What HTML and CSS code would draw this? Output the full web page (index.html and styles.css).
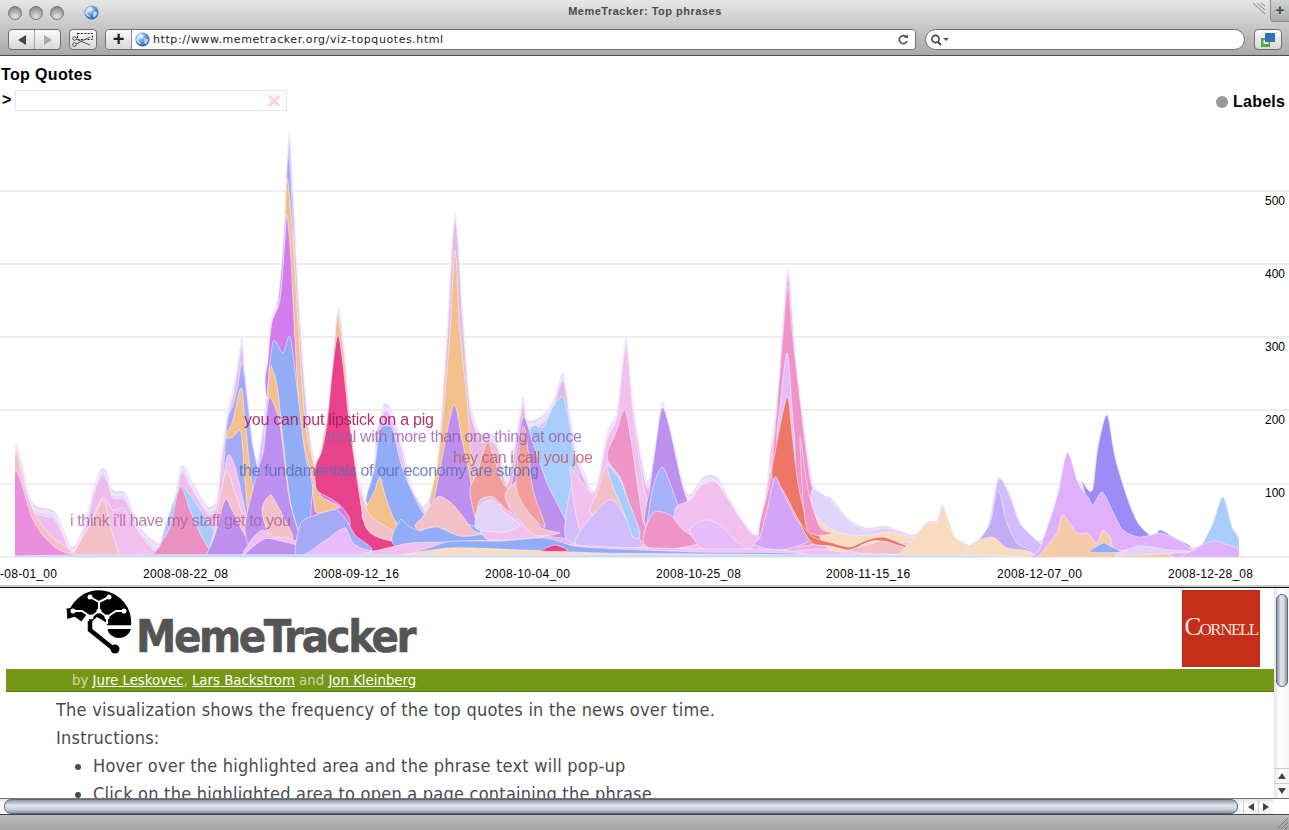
FILE: index.html
```html
<!DOCTYPE html>
<html lang="en">
<head>
    <meta charset="UTF-8">
    <meta name="viewport" content="width=device-width, initial-scale=1.0">
    <title>MemeTracker: Top phrases</title>
    <link rel="stylesheet" href="styles.css">
</head>
<body>
    <!-- Browser window top -->
    <div class="chrome">
        <div class="titlebar">
            <div class="lights">
                <span class="light"></span>
                <span class="light"></span>
                <span class="light"></span>
            </div>
            <svg class="globe globeTitle" viewBox="0 0 16 16"><use href="#globeIcon"/></svg>
            <div class="windowTitle">MemeTracker: Top phrases</div>
            <svg class="grip" viewBox="0 0 16 14"><path d="M2 1l12 11M6 1l8 7M10 1l4 3" stroke="#8b8b8b" stroke-width="1" fill="none"/></svg>
            <div class="newTab">+</div>
        </div>
        <div class="toolbar">
            <div class="btnGroup navGroup">
                <div class="toolBtn"><span class="arrowLeft"></span></div>
                <div class="toolBtn"><span class="arrowRight"></span></div>
            </div>
            <div class="btnGroup snipBtn">
                <svg viewBox="0 0 26 18" width="26" height="18">
                    <rect x="7.500" y="2.500" width="15" height="6" fill="none" stroke="#222" stroke-dasharray="2 1.400"/>
                    <path d="M6 8l14 6M6 13l14-7" stroke="#555" fill="none"/>
                    <circle cx="4.500" cy="7.500" r="1.800" fill="none" stroke="#555"/>
                    <circle cx="4.500" cy="13.500" r="1.800" fill="none" stroke="#555"/>
                </svg>
            </div>
            <div class="urlGroup">
                <div class="plusBtn">+</div>
                <div class="urlField">
                    <svg class="globe" viewBox="0 0 16 16"><use href="#globeIcon"/></svg>
                    <span class="urlText">http://www.memetracker.org/viz-topquotes.html</span>
                    <svg class="reload" viewBox="0 0 12 12"><path d="M9.500 3.400A4 4 0 1 0 10 7" fill="none" stroke="#555" stroke-width="1.700"/><path d="M7 3.600l4 .6V.4z" fill="#555"/></svg>
                </div>
            </div>
            <div class="searchField">
                <svg viewBox="0 0 20 12" width="20" height="12"><circle cx="5.500" cy="5" r="3.600" fill="none" stroke="#444" stroke-width="1.600"/><path d="M8 8l3 3" stroke="#444" stroke-width="2"/><path d="M13 4h6l-3 3z" fill="#555"/></svg>
            </div>
            <div class="btnGroup bookmarkBtn">
                <svg viewBox="0 0 16 16" width="16" height="16"><rect x="1" y="6" width="9" height="9" fill="#58a83a"/><rect x="3.500" y="8" width="5" height="4" fill="#e8f2e0"/><rect x="5" y="1" width="10" height="9" fill="#2f72b8"/></svg>
            </div>
        </div>
    </div>

    <!-- Chart frame -->
    <div class="viz">
        <div class="vizHead">
            <h1 class="vizTitle">Top Quotes</h1>
            <div class="vizControls">
                <b class="prompt">&gt;</b>
                <div class="searchBox">
                    <svg viewBox="0 0 14 14" width="14" height="14"><path d="M2 2l10 10M12 2L2 12" stroke="#f8d6d6" stroke-width="3.200" fill="none"/></svg>
                </div>
                <div class="labelsToggle"><span class="dot"></span><b>Labels</b></div>
            </div>
        </div>
        <svg class="chart" viewBox="0 112 1289 473" width="1289" height="473">
            <defs>
                <clipPath id="plotClip"><rect x="15" y="112" width="1224" height="445"/></clipPath>
                <linearGradient id="bandFill" gradientUnits="userSpaceOnUse" x1="15" x2="1239" y1="0" y2="0">
                    <stop offset="0" stop-color="#f0bcee"/>
                    <stop offset="0.17" stop-color="#eebcf0"/>
                    <stop offset="0.23" stop-color="#d0bcf8"/>
                    <stop offset="0.33" stop-color="#d8bcf8"/>
                    <stop offset="0.4" stop-color="#eebcd8"/>
                    <stop offset="0.48" stop-color="#dcb8f8"/>
                    <stop offset="0.55" stop-color="#eeb2e6"/>
                    <stop offset="0.65" stop-color="#e6b2ee"/>
                    <stop offset="0.7" stop-color="#ddbdf6"/>
                    <stop offset="0.78" stop-color="#f6d8c4"/>
                    <stop offset="1" stop-color="#dcc0fa"/>
                </linearGradient>
                <polygon id="outline" points="15,600 15,470 16,443 22,462 33,503 53,510 62,525 72,547 80,535 87,513 95,482 102,468 108,475 113,490 125,492 133,510 140,527 157,543 165,537 170,527 176,490 182,465 193,483 203,500 210,507 217,497 222,450 227,413 233,387 238,360 242,337 245,370 248,403 252,440 257,460 262,430 267,387 270,327 277,300 280,280 285,220 289,132 293,187 298,287 305,387 311,440 317,467 323,452 328,437 335,337 339,307 345,353 349,400 353,437 360,480 367,500 373,470 377,437 383,405 390,407 397,425 403,447 410,480 420,505 428,500 437,467 447,333 455,212 463,317 470,400 480,433 487,432 497,440 507,477 515,440 523,397 528,420 543,415 553,400 563,373 570,413 577,453 586,475 595,490 607,433 617,410 626,337 633,400 647,480 657,440 662,402 670,427 687,493 703,477 717,477 730,500 750,530 760,527 773,433 780,367 788,268 797,367 813,483 830,497 837,505 850,520 867,528 887,526 913,535 927,522 937,520 943,505 955,537 970,546 987,530 998,479 1010,493 1020,523 1033,537 1043,538 1057,497 1067,453 1077,480 1083,482 1092,490 1098,447 1107,415 1115,457 1127,497 1138,523 1153,537 1160,530 1173,537 1190,547 1203,543 1213,523 1223,497 1232,527 1239,540 1239,600"/>
            </defs>

            <g class="grid">
                <line x1="0" x2="1289" y1="191" y2="191"/>
                <line x1="0" x2="1289" y1="264" y2="264"/>
                <line x1="0" x2="1289" y1="337" y2="337"/>
                <line x1="0" x2="1289" y1="410" y2="410"/>
                <line x1="0" x2="1289" y1="484" y2="484"/>
                <line x1="0" x2="1289" y1="557" y2="557"/>
            </g>

            <g class="plot" clip-path="url(#plotClip)">
                <!-- silhouette and the pale bands just under it -->
                <use class="lav" href="#outline"/>
                <use class="paleBand" href="#outline" transform="translate(0,3)"/>
                <use class="lav" href="#outline" transform="translate(0,5)"/>
                <use href="#outline" transform="translate(0,8)" fill="url(#bandFill)"/>

                <!-- far left humps -->
                <polygon class="paleSalmon" points="15,600 15,455 22,478 33,510 50,535 70,550 90,570"/>
                <polygon class="softPink" points="60,570 77,547 93,517 103,497 113,510 123,508 133,523 147,543 157,553 170,570"/>
                <polygon class="paleSalmon" points="68,570 77,547 93,520 103,500 110,525 118,570"/>
                <polygon class="pinkBright" points="15,600 15,473 33,520 50,543 67,553 100,556 200,556 200,600"/>
                <polygon class="skyBlue" points="160,570 178,490 190,495 202,512 212,528 222,546 240,570"/>
                <polygon class="rose" points="150,570 160,545 170,527 180,487 190,510 200,533 212,553 230,570"/>

                <!-- hump at 242 -->
                <polygon class="peri" points="210,570 218,520 222,490 227,423 233,405 238,385 242,362 247,395 252,440 258,470 268,520 285,570"/>
                <polygon class="tan" points="226,437 233,420 241,388 245,420 250,470 258,510 272,540 252,540 245,480 241,432 233,437"/>
                <polygon class="softPink" points="210,570 218,520 222,490 228,455 236,470 244,505 252,535 270,570"/>
                <polygon class="paleSalmon" points="216,530 226,472 234,490 240,507 247,540 235,560"/>
                <polygon class="purple" points="200,570 207,553 215,535 225,500 233,512 245,535 262,552 280,570"/>

                <!-- main peak at 289 -->
                <polygon class="peri" points="262,570 262,470 268,400 275,330 283,250 288,155 292,200 296,300 302,400 310,470 325,510 345,570"/>
                <polygon class="tan" points="278,350 284,260 287,178 293,240 298,320 305,420 315,470 325,510 300,510"/>
                <polygon class="magenta" points="267,400 268,360 272,322 280,300 285,240 287,215 291,260 295,340 300,420 310,470 320,500 345,510 350,550 300,550"/>
                <polygon class="blue" points="266,470 267,400 273,342 283,353 290,337 297,387 305,453 313,487 317,510 343,510 360,540 375,560 280,560"/>
                <polygon class="tan" points="268,402 270,366 277,385 282,430 290,500 300,538 292,540 280,490 272,430"/>
                <polygon class="purple" points="245,530 258,470 264,448 268,403 272,400 280,425 288,490 292,510 300,535 315,560 262,560"/>
                <polygon class="paleSalmon" points="262,510 270,495 276,503 285,520 293,537 285,540 270,537"/>
                <polygon class="softPink" points="248,545 262,530 275,537 290,538 310,548 330,548 350,553 250,560"/>
                <polygon class="purple" points="240,570 262,540 285,542 320,552 345,570"/>

                <!-- red peak -->
                <polygon class="tan" points="320,480 330,400 336,325 339,320 345,365 350,420 358,480 365,515"/>
                <polygon class="red" points="315,480 322,450 327,423 333,365 338,335 343,365 349,420 355,465 362,510 368,530 385,537 420,548 470,553 470,570 340,570"/>
                <polygon class="magenta" points="313,490 320,493 340,505 350,520 345,530 313,530"/>
                <polygon class="tan" points="313,485 322,497 340,507 330,510 316,512"/>
                <polygon class="peri" points="300,525 316,515 335,510 345,518 355,535 370,552 300,565"/>
                <polygon class="lilac" points="290,570 315,548 330,537 345,528 353,543 367,550 400,555 420,570"/>

                <!-- hump at 383 -->
                <polygon class="lilac" points="376,450 383,415 390,415 400,450 410,485 430,525 405,535"/>
                <polygon class="blue" points="366,500 374,470 380,430 388,426 393,430 400,460 407,480 420,508 435,530 420,537 395,530 375,510"/>
                <polygon class="tan" points="362,515 370,500 375,490 380,477 385,495 393,517 403,533 395,540 368,525"/>
                <polygon class="paleSalmon" points="360,488 367,510 375,520 392,530 405,540 420,546 380,538 365,525"/>

                <!-- peak at 455 -->
                <polygon class="tan" points="430,510 437,467 443,417 450,333 455,250 460,333 467,400 472,467 480,527 460,530"/>
                <polygon class="purple" points="430,505 435,495 443,453 454,405 462,440 470,477 475,517 485,535 440,530"/>
                <polygon class="blue" points="400,520 410,527 423,530 430,510 437,503 450,520 470,525 490,530 515,530 525,548 400,548"/>
                <polygon class="paleSalmon" points="415,525 422,518 437,497 450,502 460,513 473,530 483,534 460,536 437,527 420,530"/>

                <!-- humps at 487 and 523 -->
                <polygon class="softPink" points="478,520 490,505 505,505 520,505 535,525 550,535 490,540"/>
                <polygon class="salmon" points="470,490 477,473 487,442 493,455 503,483 517,500 520,515 507,510 493,497 480,500 475,515"/>
                <polygon class="paleLav" points="475,525 480,505 493,500 505,513 520,525 505,532 480,530"/>
                <polygon class="skyBlue" points="520,500 530,430 543,427 553,407 563,397 570,427 575,467 582,517 590,535 565,535"/>
                <polygon class="purple" points="510,510 515,467 523,417 533,443 547,483 557,503 567,523 577,537 545,535"/>
                <polygon class="paleSalmon" points="505,495 520,480 528,500 540,527 560,533 535,535 515,515"/>
                <polygon class="salmon" points="516,485 523,427 528,450 533,490 545,527 527,510"/>
                <polygon class="lilacCool" points="565,535 575,470 582,490 590,510 605,530 625,545 590,545"/>

                <!-- peak at 626 -->
                <polygon class="softPink" points="570,470 580,480 595,492 607,440 617,416 626,347 633,413 643,483 653,520 675,550 590,550"/>
                <polygon class="paleSalmon" points="590,510 597,493 607,465 617,490 630,530 600,522"/>
                <polygon class="lilacCool" points="575,540 600,507 613,500 627,520 645,545 590,550"/>
                <polygon class="pinkHot" points="607,457 617,430 625,410 633,453 643,520 653,537 640,540 627,497 620,477"/>
                <polygon class="skyBlue" points="607,465 620,480 627,497 640,533 633,537 623,510 613,487"/>

                <!-- peak at 662 -->
                <polygon class="purple" points="645,525 650,487 655,450 662,408 670,430 683,487 697,523 713,540 670,545"/>
                <polygon class="periLight" points="645,535 647,523 653,487 662,467 670,483 680,510 693,533 670,540"/>
                <polygon class="softPink" points="675,510 690,500 703,484 717,483 730,503 750,532 760,536 745,550 680,550"/>
                <polygon class="pinkHot" points="643,542 653,513 670,515 683,530 700,543 660,550"/>
                <polygon class="lilac" points="690,530 705,520 720,525 735,540 745,550 705,550"/>

                <!-- peak at 788 -->
                <polygon class="softPink" points="770,470 783,400 793,370 800,400 813,487 828,500 845,530 805,530"/>
                <polygon class="pinkHot" points="760,540 770,480 777,407 783,333 788,287 793,340 800,400 806,450 813,490 830,525 810,545"/>
                <polygon class="lilac" points="777,440 780,407 787,353 792,407 795,460 785,480"/>
                <polygon class="coral" points="772,477 775,453 787,397 792,433 798,483 807,517 830,543 813,542 797,517 783,490"/>
                <polygon class="purpleSoft" points="755,545 760,537 767,510 775,477 783,493 797,520 810,540 780,550"/>

                <!-- after 800 -->
                <polygon class="paleLav" points="812,490 830,500 850,522 867,530 887,528 913,537 880,542 840,540 815,525"/>
                <polygon class="paleTan" points="806,505 820,520 833,530 850,535 870,535 890,532 916,540 880,545 830,550"/>
                <polygon class="pinkHot" points="800,437 808,490 820,527 833,533 815,535 805,520"/>
                <polygon class="coral" points="800,523 813,537 833,543 850,547 867,540 883,537 900,543 917,552 880,541 866,543 850,550 830,546 812,543"/>
                <polygon class="paleSalmon" points="850,551 867,545 883,541 900,546 920,553 880,555"/>
                <polygon class="softPink" points="790,552 820,549 850,553 900,555 790,556"/>

                <!-- peak at 943 -->
                <polygon class="paleTan" points="895,570 917,535 927,523 937,522 943,507 955,537 970,546 995,570"/>

                <!-- peak at 998 -->
                <polygon class="lilacCool" points="960,570 968,548 987,530 998,480 1008,492 1020,523 1033,537 1043,547 1055,570"/>
                <polygon class="lilacDeep" points="976,545 990,523 998,490 1007,523 1017,543 1030,552 976,552"/>
                <polygon class="paleTan" points="955,570 973,545 992,537 1007,548 1030,552 1050,570"/>

                <!-- peaks at 1067 and 1107 -->
                <polygon class="violet" points="1082,482 1088,490 1093,488 1098,447 1107,415 1115,457 1127,497 1138,523 1153,537 1160,530 1173,537 1190,547 1150,548 1100,530"/>
                <polygon class="lilacWarm" points="1030,570 1040,548 1057,497 1067,453 1077,480 1082,490 1088,497 1093,505 1102,492 1112,510 1123,530 1140,537 1160,533 1173,538 1190,548 1200,570"/>
                <polygon class="tanSoft" points="1035,570 1043,552 1057,533 1063,515 1077,533 1087,533 1097,543 1103,530 1110,537 1117,550 1160,550 1175,570"/>
                <polygon class="blue" points="1090,552 1103,543 1108,545 1120,552"/>
                <polygon class="paleLav" points="1120,553 1140,546 1170,550 1190,552 1120,556"/>

                <!-- last peak -->
                <polygon class="skyBlue" points="1190,570 1203,543 1213,523 1223,497 1232,527 1239,540 1245,570"/>
                <polygon class="lilacWarm" points="1165,570 1195,549 1213,541 1225,544 1245,552 1245,570"/>

                <!-- bottom stripes -->
                <polygon class="softPink" points="350,570 400,545 450,542 500,540 560,544 610,547 700,549 790,551 800,570"/>
                <polygon class="blue" points="410,570 440,544 470,541 500,541 545,538 575,546 620,549 700,552 800,554 820,570"/>
                <polygon class="paleTan" points="370,570 440,549 520,550 600,553 700,554 800,556 830,570"/>
                <polygon class="red" points="542,551 555,545 568,551"/>
                <polygon class="paleSky" points="15,570 15,556 500,555 1000,556 1000,570"/>
            </g>

            <g class="axisY">
                <text x="1265" y="205">500</text>
                <text x="1265" y="278">400</text>
                <text x="1265" y="351">300</text>
                <text x="1265" y="424">200</text>
                <text x="1265" y="497">100</text>
            </g>
            <g class="axisX">
                <text x="-28" y="578">2008-08-01_00</text>
                <text x="143" y="578">2008-08-22_08</text>
                <text x="314" y="578">2008-09-12_16</text>
                <text x="485" y="578">2008-10-04_00</text>
                <text x="656" y="578">2008-10-25_08</text>
                <text x="826" y="578">2008-11-15_16</text>
                <text x="997" y="578">2008-12-07_00</text>
                <text x="1168" y="578">2008-12-28_08</text>
            </g>
            <g class="quotes">
                <text class="q1" x="244" y="425" textLength="190">you can put lipstick on a pig</text>
                <text class="q2" x="327" y="442" textLength="255">deal with more than one thing at once</text>
                <text class="q3" x="453" y="463" textLength="140">hey can i call you joe</text>
                <text class="q4" x="239" y="476" textLength="300">the fundamentals of our economy are strong</text>
                <text class="q5" x="70" y="526" textLength="221">i think i'll have my staff get to you</text>
            </g>
        </svg>
    </div>
    <div class="frameLine"></div>

    <!-- Lower frame -->
    <div class="lowerFrame">
        <div class="pageContent">
            <div class="logoRow">
                <svg class="logoMark" viewBox="0 0 80 70" width="80" height="70">
                    <path d="M7 29A32 32 0 0 1 71 36L47 36L47 33L37 27L29 34L29 25L20 25Z" fill="#000"/>
                    <path d="M7 23L16 22L24 28" stroke="#000" stroke-width="9" fill="none"/>
                    <path d="M47 39H71A12.500 12.500 0 0 1 47 39Z" fill="#000"/>
                    <path d="M30 31V40L55 60" stroke="#000" stroke-width="4.500" fill="none"/>
                    <path d="M31 27L39 21L47 27V34M39 21V12L30 7M39 12L49 7M47 27L56 21L64 21M31 27L22 21L15 21" stroke="#fff" stroke-width="2" fill="none"/>
                    <path d="M37 30V40L47 45V36H72" stroke="#fff" stroke-width="1.600" fill="none"/>
                    <circle cx="31" cy="27" r="2.500" fill="#fff"/><circle cx="47" cy="27" r="2.500" fill="#fff"/><circle cx="39" cy="21" r="2.500" fill="#fff"/>
                    <circle cx="30" cy="7" r="2.500" fill="#fff"/><circle cx="49" cy="7" r="2.500" fill="#fff"/><circle cx="64" cy="21" r="2.500" fill="#fff"/><circle cx="13" cy="21" r="2.500" fill="#fff"/>
                    <circle cx="55" cy="59" r="4.500" fill="#000"/>
                </svg>
                <div class="wordmark">MemeTracker</div>
                <div class="cornell"><span class="cornellBig">C</span>ORNELL</div>
            </div>
            <div class="authorBar">by <a href="#">Jure Leskovec</a>, <a href="#">Lars Backstrom</a> and <a href="#">Jon Kleinberg</a></div>
            <div class="intro">
                <p>The visualization shows the frequency of the top quotes in the news over time.</p>
                <p>Instructions:</p>
                <ul>
                    <li>Hover over the highlighted area and the phrase text will pop-up</li>
                    <li>Click on the highlighted area to open a page containing the phrase.</li>
                </ul>
            </div>
        </div>
        <div class="vScroll">
            <div class="vThumb"></div>
            <div class="vTrack"></div>
            <div class="scrollBtn"><span class="tinyUp"></span></div>
            <div class="scrollBtn"><span class="tinyDown"></span></div>
        </div>
    </div>
    <div class="hScroll">
        <div class="hThumb"></div>
        <div class="scrollBtnH"><span class="tinyLeft"></span></div>
        <div class="scrollBtnH"><span class="tinyRight"></span></div>
        <div class="scrollCorner"></div>
    </div>
    <div class="statusBar">
        <svg viewBox="0 0 14 14" width="14" height="14"><path d="M13 2L2 13M13 6L6 13M13 10L10 13" stroke="#777" fill="none"/></svg>
    </div>

    <svg class="iconDefs" width="0" height="0">
        <defs>
            <radialGradient id="globeFill" cx="40%" cy="30%" r="75%">
                <stop offset="0" stop-color="#cfe6fb"/>
                <stop offset="0.5" stop-color="#5a9be0"/>
                <stop offset="1" stop-color="#1f5cae"/>
            </radialGradient>
            <symbol id="globeIcon" viewBox="0 0 16 16">
                <circle cx="8" cy="8" r="7.500" fill="url(#globeFill)"/>
                <path d="M5 2c3 0 5 1 4 3S5 6 4 8s2 3 3 5c-3 0-5-2-6-5 1-3 2-5 4-6zM11 7c2 0 3 1 3 2s-2 4-3 4-1-2-1-3 0-3 1-3z" fill="#e8f1fb" opacity=".75"/>
            </symbol>
        </defs>
    </svg>

    <script src="chart.js"></script>
</body>
</html>
```

FILE: styles.css
```css
/* page */
html, body {
    margin: 0;
    padding: 0;
}

body {
    width: 1289px;
    height: 830px;
    overflow: hidden;
    display: flex;
    flex-direction: column;
    background-color: #fff;
    font-family: "Liberation Sans", Arial, sans-serif;
    color: #000;
}

/* window chrome */
.chrome {
    height: 55px;
    flex: none;
    background: linear-gradient(#e6e6e6, #c6c6c6 50%, #a9a9a9);
    border-bottom: 1px solid #4a4a4a;
}

.titlebar {
    height: 24px;
    display: flex;
    align-items: center;
    position: relative;
}

.lights {
    display: flex;
    gap: 7px;
    margin-left: 8px;
    margin-top: 1px;
}

.light {
    width: 14px;
    height: 14px;
    border-radius: 50%;
    border: 1px solid #777;
    box-sizing: border-box;
    background: radial-gradient(circle at 50% 85%, #e8e8e8, #a9a9a9 55%, #777);
}

.globe {
    width: 15px;
    height: 15px;
    flex: none;
}

.globeTitle {
    margin-left: 20px;
}

.windowTitle {
    flex: 1;
    text-align: center;
    font-size: 11px;
    font-weight: bold;
    letter-spacing: 0.5px;
    color: #4c4c4c;
    padding-right: 60px;
    margin-top: -2px;
}

.grip {
    width: 16px;
    height: 14px;
    margin-right: 3px;
    margin-top: -6px;
}

.newTab {
    width: 18px;
    height: 21px;
    margin-top: -3px;
    border-left: 1px solid #8a8a8a;
    border-bottom: 1px solid #8a8a8a;
    border-bottom-left-radius: 4px;
    background: linear-gradient(#d2d2d2, #ababab);
    text-align: center;
    font-size: 15px;
    font-weight: bold;
    line-height: 20px;
    color: #444;
}

.toolbar {
    height: 21px;
    margin-top: 5px;
    padding-left: 8px;
    display: flex;
    align-items: stretch;
}

.btnGroup {
    display: flex;
    border: 1px solid #6f6f6f;
    border-radius: 4px;
    box-sizing: border-box;
    background: linear-gradient(#fafafa, #d8d8d8);
    align-items: center;
    justify-content: center;
}

.navGroup {
    width: 53px;
}

.toolBtn {
    flex: 1;
    height: 100%;
    display: flex;
    align-items: center;
    justify-content: center;
}

.toolBtn + .toolBtn {
    border-left: 1px solid #a8a8a8;
}

.arrowLeft {
    border-top: 5px solid transparent;
    border-bottom: 5px solid transparent;
    border-right: 8px solid #444;
}

.arrowRight {
    border-top: 5px solid transparent;
    border-bottom: 5px solid transparent;
    border-left: 8px solid #a8a8a8;
}

.snipBtn {
    width: 28px;
    margin-left: 8px;
}

.urlGroup {
    width: 811px;
    margin-left: 8px;
    display: flex;
    border: 1px solid #6f6f6f;
    border-radius: 4px;
    box-sizing: border-box;
    overflow: hidden;
}

.plusBtn {
    width: 26px;
    flex: none;
    box-sizing: border-box;
    border-right: 1px solid #8a8a8a;
    background: linear-gradient(#fafafa, #d8d8d8);
    text-align: center;
    font-size: 20px;
    font-weight: bold;
    line-height: 18px;
    color: #222;
}

.urlField {
    flex: 1;
    display: flex;
    align-items: center;
    background-color: #fff;
    padding-left: 3px;
}

.urlText {
    flex: 1;
    margin-left: 3px;
    font-family: "DejaVu Sans", sans-serif;
    font-size: 11px;
    letter-spacing: 0.58px;
    color: #1a1a1a;
    white-space: nowrap;
}

.reload {
    width: 12px;
    height: 12px;
    margin-right: 6px;
}

.searchField {
    width: 320px;
    margin-left: 9px;
    box-sizing: border-box;
    border: 1px solid #6f6f6f;
    border-radius: 11px;
    background-color: #fff;
    display: flex;
    align-items: center;
    padding-left: 4px;
}

.bookmarkBtn {
    width: 28px;
    margin-left: 9px;
}

/* chart frame */
.viz {
    height: 529px;
    flex: none;
    overflow: hidden;
}

.vizHead {
    height: 56px;
    box-sizing: border-box;
    padding-top: 10px;
}

.vizTitle {
    margin: 0 0 0 1px;
    font-size: 16px;
    line-height: 18px;
    letter-spacing: 0.35px;
    font-weight: bold;
}

.vizControls {
    display: flex;
    align-items: center;
    margin-top: 6px;
    height: 21px;
    padding-left: 2px;
}

.prompt {
    font-size: 16px;
    width: 13px;
    margin-top: -1px;
}

.searchBox {
    width: 272px;
    height: 21px;
    box-sizing: border-box;
    border: 1px solid #e6e6e6;
    display: flex;
    align-items: center;
    justify-content: flex-end;
    padding-right: 5px;
}

.labelsToggle {
    margin-left: auto;
    display: flex;
    align-items: center;
    font-size: 16px;
    letter-spacing: 0.2px;
    margin-right: 4px;
    margin-top: 2px;
}

.dot {
    width: 12px;
    height: 12px;
    border-radius: 50%;
    background-color: #999;
    margin-right: 5px;
}

.chart {
    display: block;
}

.grid line {
    stroke: #dddddd;
    stroke-width: 1;
}

.plot {
    filter: blur(0.35px);
}

.plot path,
.plot use {
    stroke: #f8f0fc;
    stroke-width: 0.6;
    stroke-linejoin: round;
}

.axisY text {
    font-size: 12px;
    fill: #000;
}

.axisX text {
    font-size: 12px;
    letter-spacing: 0.3px;
    fill: #000;
}

.quotes text {
    font-size: 16px;
}

.q1 { fill: #a81e5c; opacity: 0.9; }
.q2 { fill: #9a5ab0; opacity: 0.8; }
.q3 { fill: #b8606a; opacity: 0.85; }
.q4 { fill: #5a70b8; opacity: 0.85; }
.q5 { fill: #a8609a; opacity: 0.8; }

/* chart colours */
.lav { fill: #e2d9f8; }
.paleBand { fill: #eae1f9; }
.paleLav { fill: #e0d4fa; }
.paleSalmon { fill: #f4c0c8; }
.softPink { fill: #f2c0ee; }
.pinkBright { fill: #ec8ede; }
.pinkHot { fill: #ef94c8; }
.rose { fill: #ea90c2; }
.skyBlue { fill: #a9cdfb; }
.paleSky { fill: #c8d8fa; }
.peri { fill: #a5aaf6; }
.periLight { fill: #a8b2f8; }
.blue { fill: #92acf8; }
.tan { fill: #f3c08c; }
.tanSoft { fill: #f6caa6; }
.paleTan { fill: #f8dcc0; }
.magenta { fill: #d27cf0; }
.purple { fill: #bd90f0; }
.purpleSoft { fill: #d4a4f8; }
.lilac { fill: #e6bcfa; }
.lilacCool { fill: #d2bcfc; }
.lilacDeep { fill: #c2acf4; }
.lilacWarm { fill: #e0b0fc; }
.violet { fill: #9c8cf8; }
.red { fill: #e8428a; }
.coral { fill: #ee7666; }
.salmon { fill: #f09d9c; }

.frameLine {
    height: 3px;
    flex: none;
    box-sizing: border-box;
    background-color: #ccc;
    border-bottom: 1px solid #111;
}

/* lower frame */
.lowerFrame {
    height: 210px;
    flex: none;
    display: flex;
    overflow: hidden;
}

.pageContent {
    width: 1274px;
    flex: none;
    font-family: "DejaVu Sans Condensed", "DejaVu Sans", sans-serif;
    color: #4a4a4a;
}

.logoRow {
    height: 81px;
    display: flex;
    align-items: flex-start;
    padding-left: 60px;
}

.logoMark {
    margin-top: 2px;
    flex: none;
    margin-right: -4px;
}

.wordmark {
    font-family: "DejaVu Sans Condensed", "DejaVu Sans", sans-serif;
    font-weight: bold;
    font-size: 45px;
    letter-spacing: -2.4px;
    -webkit-text-stroke: 0.6px #555;
    color: #555;
    line-height: 50px;
    margin-top: 24px;
}

.cornell {
    margin-left: auto;
    margin-right: 14px;
    margin-top: 2px;
    width: 78px;
    height: 77px;
    box-sizing: border-box;
    background-color: #c42e1a;
    color: #f6e4dc;
    font-family: "Liberation Serif", serif;
    font-size: 17px;
    letter-spacing: -1.5px;
    display: flex;
    align-items: baseline;
    justify-content: center;
    line-height: 74px;
    white-space: nowrap;
}

.cornellBig {
    font-size: 25px;
}

.authorBar {
    margin-left: 6px;
    height: 23px;
    box-sizing: border-box;
    background-color: #749716;
    border-bottom: 1px solid #5a7410;
    padding-left: 66px;
    font-size: 14.8px;
    line-height: 22px;
    color: #cfd9b0;
}

.authorBar a {
    color: #fff;
}

.intro {
    padding-left: 56px;
    padding-top: 4px;
    font-size: 18px;
    letter-spacing: 0.23px;
    line-height: 28px;
}

.intro p {
    margin: 0;
}

.intro ul {
    margin: 0;
    padding-left: 37px;
}

/* scrollbars */
.vScroll {
    width: 15px;
    flex: none;
    display: flex;
    flex-direction: column;
    background: linear-gradient(to right, #e4e4e4, #fff 40%, #f4f4f4);
    padding-top: 6px;
    box-sizing: border-box;
}

.vThumb {
    width: 12px;
    height: 93px;
    margin-left: 2px;
    box-sizing: border-box;
    border-radius: 6px;
    border: 1px solid #5c6a80;
    background: linear-gradient(to right, #8a94a4, #e2e6ec 40%, #ccd4e0 70%, #8a94a4);
}

.vTrack {
    flex: 1;
}

.scrollBtn {
    height: 14px;
    flex: none;
    display: flex;
    align-items: center;
    justify-content: center;
    border-top: 1px solid #ccc;
}

.tinyUp {
    border-left: 4px solid transparent;
    border-right: 4px solid transparent;
    border-bottom: 6px solid #444;
}

.tinyDown {
    border-left: 4px solid transparent;
    border-right: 4px solid transparent;
    border-top: 6px solid #444;
}

.hScroll {
    height: 17px;
    flex: none;
    box-sizing: border-box;
    display: flex;
    padding-left: 4px;
    border-top: 1px solid #777;
    border-bottom: 1px solid #444;
    background: linear-gradient(#e4e4e4, #fff 40%, #f0f0f0);
}

.hThumb {
    width: 1234px;
    box-sizing: border-box;
    border-radius: 7px;
    border: 1px solid #5c6a80;
    background: linear-gradient(#8a94a4, #e2e6ec 40%, #ccd4e0 70%, #8a94a4);
    margin-right: 5px;
}

.scrollBtnH {
    width: 14px;
    flex: none;
    display: flex;
    align-items: center;
    justify-content: center;
    border-left: 1px solid #ccc;
}

.tinyLeft {
    border-top: 4px solid transparent;
    border-bottom: 4px solid transparent;
    border-right: 6px solid #444;
}

.tinyRight {
    border-top: 4px solid transparent;
    border-bottom: 4px solid transparent;
    border-left: 6px solid #444;
}

.scrollCorner {
    flex: 1;
    background-color: #fff;
}

.statusBar {
    flex: 1;
    background: linear-gradient(#bdbdbd, #a5a5a5);
    display: flex;
    justify-content: flex-end;
    align-items: flex-end;
}

.iconDefs {
    position: absolute;
}
```

FILE: chart.js
```js
// the stream shapes are traced as point lists, here they get rounded off
var SVG_NS = 'http://www.w3.org/2000/svg';

function readPoints(poly) {
    return poly.getAttribute('points').trim().split(/\s+/).map(function (pair) {
        var xy = pair.split(',');
        return { x: parseFloat(xy[0]), y: parseFloat(xy[1]) };
    });
}

function smoothPath(pts) {
    var n = pts.length;
    var k = 0.14;
    var d = 'M' + pts[0].x + ' ' + pts[0].y;
    for (var i = 0; i < n; i++) {
        var p0 = pts[(i - 1 + n) % n];
        var p1 = pts[i];
        var p2 = pts[(i + 1) % n];
        var p3 = pts[(i + 2) % n];
        var c1x = p1.x + (p2.x - p0.x) * k;
        var c1y = p1.y + (p2.y - p0.y) * k;
        var c2x = p2.x - (p3.x - p1.x) * k;
        var c2y = p2.y - (p3.y - p1.y) * k;
        d += 'C' + c1x.toFixed(1) + ' ' + c1y.toFixed(1) + ' ' + c2x.toFixed(1) + ' ' + c2y.toFixed(1) + ' ' + p2.x + ' ' + p2.y;
    }
    return d + 'Z';
}

document.querySelectorAll('.chart polygon').forEach(function (poly) {
    var path = document.createElementNS(SVG_NS, 'path');
    if (poly.id) path.id = poly.id;
    if (poly.getAttribute('class')) path.setAttribute('class', poly.getAttribute('class'));
    path.setAttribute('d', smoothPath(readPoints(poly)));
    poly.parentNode.replaceChild(path, poly);
});
```
